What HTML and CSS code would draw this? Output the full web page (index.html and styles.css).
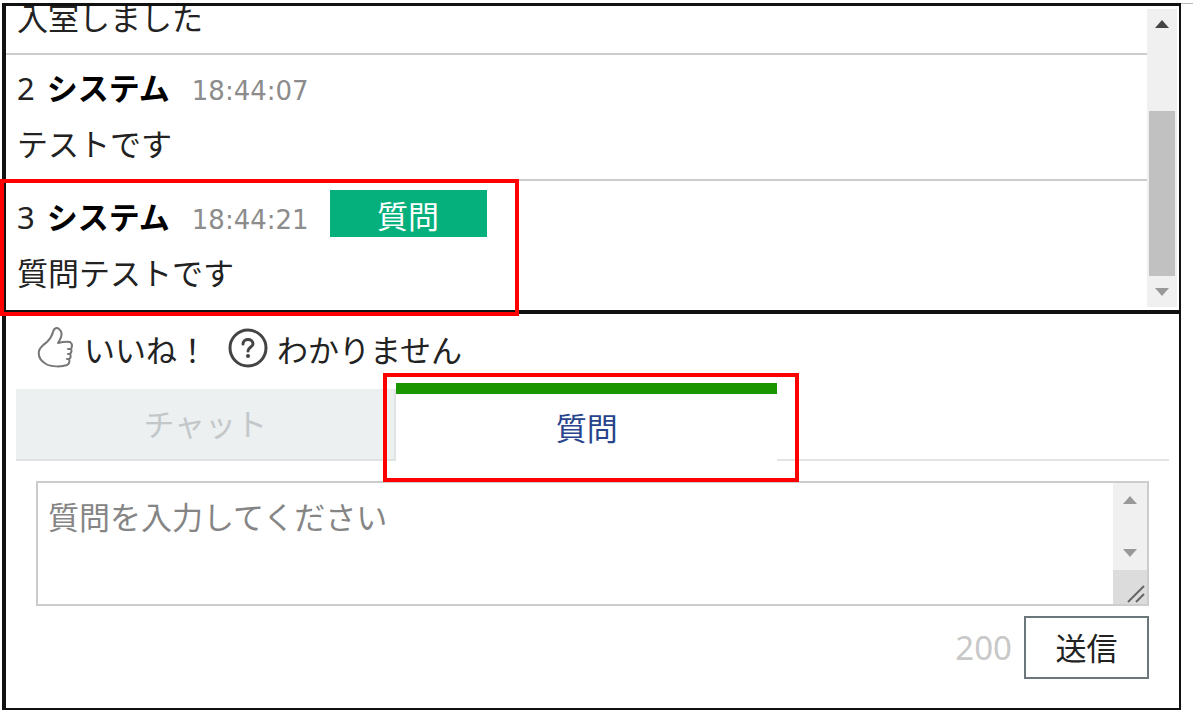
FILE: index.html
```html
<!DOCTYPE html>
<html lang="ja">
<head>
<meta charset="utf-8">
<title>チャット</title>
<link rel="stylesheet" href="styles.css">
</head>
<body>
<main class="panel">
  <section class="log">
    <div class="messages">
      <article class="message">
        <p class="message-text">入室しました</p>
      </article>
      <article class="message">
        <header class="message-head"><span>2</span><b class="author">システム</b><time class="time">18:44:07</time></header>
        <p class="message-text">テストです</p>
      </article>
      <article class="message message-last">
        <header class="message-head"><span>3</span><b class="author">システム</b><time class="time">18:44:21</time><span class="badge">質問</span></header>
        <p class="message-text">質問テストです</p>
      </article>
    </div>
    <div class="scrollbar" aria-hidden="true">
      <svg class="arrow arrow-dark" viewBox="0 0 14 8"><path d="M7 0L14 8H0Z"/></svg>
      <div class="thumb"></div>
      <svg class="arrow" viewBox="0 0 14 8"><path d="M0 0H14L7 8Z"/></svg>
    </div>
    <div class="mark mark-message"></div>
  </section>

  <div class="reactions">
    <button type="button" class="reaction">
      <svg class="icon icon-like" viewBox="0 0 36 42" aria-hidden="true"><path d="M2 24C3 20 6 18 10 15C13 12 15 9 16 5C17 1 20 0 22 2C26 5 25 10 21 16C25 15 29 14 33 15C36 17 35 20 34 22C35 24 34 26 33 27C34 29 34 31 32 32C33 35 32 37 30 38C25 40 14 40 9 37C4 34 1 29 2 24Z"/><path d="M31 22H34M31 27H33M30 32H32"/></svg>
      <span>いいね！</span>
    </button>
    <button type="button" class="reaction reaction-help">
      <svg class="icon icon-help" viewBox="0 0 40 42" aria-hidden="true"><circle cx="20" cy="21" r="18"/><path d="M15 17C15 11 25 11 25 17C25 20 20 20 20 24"/><circle class="dot" cx="20" cy="29" r="2"/></svg>
      <span>わかりません</span>
    </button>
  </div>

  <div class="tabs" role="tablist">
    <button type="button" class="tab" role="tab" aria-selected="false">チャット</button>
    <button type="button" class="tab tab-active" role="tab" aria-selected="true">質問</button>
    <span class="tab-rest"></span>
    <div class="mark mark-tab"></div>
  </div>

  <form class="composer">
    <div class="field">
      <textarea class="input" aria-label="質問" placeholder="質問を入力してください"></textarea>
      <div class="field-bar" aria-hidden="true">
        <div class="field-track">
          <svg class="arrow" viewBox="0 0 14 8"><path d="M7 0L14 8H0Z"/></svg>
          <svg class="arrow" viewBox="0 0 14 8"><path d="M0 0H14L7 8Z"/></svg>
        </div>
        <svg class="grip" viewBox="0 0 34 34"><path d="M15 32L31 16M23 32L31 24"/></svg>
      </div>
    </div>
    <div class="actions">
      <span class="count">200</span>
      <button type="button" class="send">送信</button>
    </div>
  </form>
</main>
<hr class="edge">
</body>
</html>
```
FILE: styles.css
```css
* { box-sizing: border-box; }
body {
  display: flex;
  align-items: flex-start;
  margin: 0;
  padding: 3px 0 0 2px;
  background: #fff;
  color: #222;
  font: 31px/56px "Noto Sans", "Noto Sans CJK JP", sans-serif;
}
button, textarea { font: inherit; color: inherit; }
button { margin: 0; padding: 0; border: 0; background: none; }
p { margin: 0; }

.panel {
  flex: 1;
  border: solid #111;
  border-width: 3px 2px 2px 4px;
}
.edge { width: 12px; margin: 0; border: 0; border-top: 1px solid #bbb; }

.log {
  position: relative;
  display: flex;
  height: 308px;
  border-bottom: 4px solid #111;
}
.messages {
  flex: 1;
  display: flex;
  flex-direction: column;
  justify-content: flex-end;
  overflow: hidden;
}
.message { padding: 5px 11px 7px; border-bottom: 2px solid #ccc; }
.message-last { padding: 8px 11px 9px; border: 0; }
.message-head { display: flex; height: 56px; }
.author { margin-left: 12px; color: #000; }
.time {
  margin-left: 22px;
  padding-top: 3px;
  color: #8c8c8c;
  font-family: "DejaVu Sans", sans-serif;
  font-size: 26px;
}
.badge {
  width: 157px;
  height: 47px;
  margin: 1px 0 0 21px;
  background: #06b07c;
  color: #fff;
  line-height: 52px;
  text-align: center;
}

.scrollbar {
  display: flex;
  flex-direction: column;
  align-items: center;
  width: 30px;
  margin: 3px 2px 3px 0;
  padding: 11px 0;
  background: #f0f0f0;
}
.arrow { display: block; width: 14px; height: 8px; fill: #999; }
.arrow-dark { fill: #444; }
.thumb { width: 26px; height: 165px; margin: auto 0 12px; background: #c1c1c1; }

.mark { position: absolute; border: 4px solid #f00; pointer-events: none; }
.mark-message { left: -6px; top: 173px; width: 519px; height: 137px; }
.mark-tab { left: 367px; top: -10px; width: 416px; height: 109px; }

.reactions { display: flex; gap: 20px; height: 69px; padding: 8px 31px 0; }
.reaction { display: flex; gap: 11px; }
.reaction-help { gap: 9px; }
.icon { height: 42px; margin-top: 5px; fill: none; stroke: #777; stroke-width: 2; stroke-linejoin: round; stroke-linecap: round; }
.icon-like { width: 36px; }
.icon-help { width: 40px; stroke: #444; stroke-width: 3; }
.dot { fill: #444; stroke: none; }

.tabs { position: relative; display: flex; height: 78px; margin: 0 10px; }
.tab {
  flex: 0 0 33%;
  margin-top: 6px;
  border: solid #dfe3e4;
  border-width: 0 2px 2px 0;
  background: #ecf0f1;
  color: #c2c7c9;
}
.tab-active {
  margin: 0;
  border: 0;
  border-top: 11px solid #1a9600;
  background: #fff;
  color: #27448c;
}
.tab-rest { flex: 1; border-bottom: 2px solid #e3e3e3; }

.composer { padding: 20px 30px 29px; }
.field { display: flex; height: 125px; border: 2px solid #ccc; }
.input {
  flex: 1;
  padding: 6px 10px;
  border: 0;
  outline: 0;
  resize: none;
  background: #fff;
}
.input::placeholder { color: #858585; }
.field-bar { display: flex; flex-direction: column; width: 34px; }
.field-track {
  flex: 1;
  display: flex;
  flex-direction: column;
  align-items: center;
  justify-content: space-between;
  padding: 13px 0;
  background: #f0f0f0;
}
.grip { width: 34px; height: 34px; background: #dcdcdc; fill: none; stroke: #666; stroke-width: 2; }
.actions { display: flex; justify-content: flex-end; align-items: center; gap: 12px; margin-top: 10px; }
.count { color: #c8c8c8; font-size: 33px; }
.send { width: 125px; height: 63px; border: 2px solid #6c777c; background: #fff; }
```
